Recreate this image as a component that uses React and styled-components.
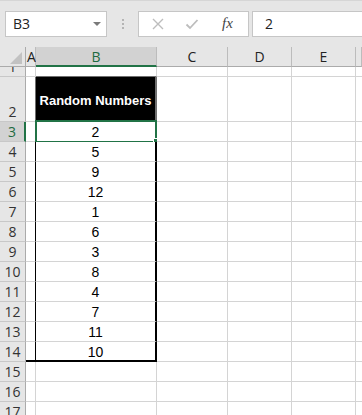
import React from 'react'
import styled, { createGlobalStyle } from 'styled-components'

const GlobalStyle = createGlobalStyle`
  html, body {
    margin: 0;
    padding: 0;
    background: #ffffff;
    overflow: hidden;
  }
  * {
    box-sizing: border-box;
  }
`

const Page = styled.div`
  width: 362px;
  height: 415px;
  overflow: hidden;
  font-family: "Open Sans", "Liberation Sans", sans-serif;
`

const FormulaBar = styled.div`
  height: 47px;
  background: #e6e6e6;
  border-top: 1px solid #d6d6d6;
  display: flex;
  align-items: center;
  padding: 0 0 1px 5px;
`

const NameBox = styled.div`
  width: 102px;
  height: 26px;
  background: #fff;
  border: 1px solid #c6c6c6;
  display: flex;
  align-items: center;
  justify-content: space-between;
  padding: 0 5px 0 7px;
  font-size: 14px;
  color: #222;
`

const Caret = styled.span`
  width: 0;
  height: 0;
  border-left: 4px solid transparent;
  border-right: 4px solid transparent;
  border-top: 4px solid #7a7a7a;
  margin-top: 1px;
`

const Grip = styled.div`
  width: 31px;
  display: flex;
  flex-direction: column;
  align-items: center;
  gap: 2px;

  span {
    width: 2px;
    height: 2px;
    background: #b4b4b4;
  }
`

const FxBox = styled.div`
  width: 111px;
  height: 26px;
  background: #fff;
  border: 1px solid #c6c6c6;
  display: flex;
  align-items: center;
  padding: 0 0 0 12px;
  gap: 20px;
`

const Fx = styled.span`
  font-family: "Liberation Serif", "DejaVu Serif", serif;
  font-style: italic;
  font-size: 15px;
  color: #444;
  margin-left: 3px;
`

const ValueBox = styled.div`
  flex: 1;
  height: 26px;
  margin-left: 3px;
  background: #fff;
  border: 1px solid #c6c6c6;
  border-right: none;
  display: flex;
  align-items: center;
  padding-left: 12px;
  font-size: 14px;
  color: #222;
`

const Sheet = styled.div`
  display: grid;
  grid-template-columns: 26px 10px 121px 71px 64px 64px 1fr;
  grid-template-rows: 20px 10px 45px;
  grid-auto-rows: 20px;
`

const Corner = styled.div`
  background: #e6e6e6;
  border-right: 1px solid #ababab;
  border-bottom: 1px solid #ababab;
  display: flex;
  align-items: flex-end;
  justify-content: flex-end;
  padding: 0 3px 2px 0;
`

const ColHead = styled.div`
  background: ${p => (p.$active ? '#d2d2d2' : '#e6e6e6')};
  border-right: 1px solid #bcbcbc;
  border-bottom: ${p => (p.$active ? '2px solid #217346' : '1px solid #ababab')};
  color: ${p => (p.$active ? '#1e6b41' : '#222')};
  font-size: 14px;
  display: flex;
  align-items: center;
  justify-content: ${p => (p.$narrow ? 'flex-start' : 'center')};
  padding-left: ${p => (p.$narrow ? '1px' : '0')};
  overflow: visible;
  white-space: nowrap;
`

const RowHead = styled.div`
  background: ${p => (p.$active ? '#d2d2d2' : '#e6e6e6')};
  border-right: ${p => (p.$active ? '2px solid #217346' : '1px solid #ababab')};
  border-bottom: 1px solid #c8c8c8;
  color: ${p => (p.$active ? '#1e6b41' : '#333')};
  font-size: 14px;
  line-height: 18px;
  display: flex;
  align-items: flex-end;
  justify-content: center;
  overflow: hidden;
`

const Cell = styled.div`
  position: relative;
  background: ${p => p.$bg || '#fff'};
  border-right: ${p => p.$right || '1px solid #d4d4d4'};
  border-bottom: ${p => p.$bottom || '1px solid #d4d4d4'};
  color: ${p => p.$color || '#000'};
  font-family: "Liberation Sans", Arial, sans-serif;
  font-size: ${p => (p.$bold ? '13px' : '14px')};
  font-weight: ${p => (p.$bold ? 700 : 400)};
  display: flex;
  align-items: center;
  justify-content: center;
  padding-top: ${p => (p.$bold ? '3px' : '1px')};
  white-space: nowrap;
`

const Selection = styled.div`
  position: absolute;
  left: -1px;
  top: -2px;
  width: 122px;
  height: 23px;
  border: 2px solid #217346;
  pointer-events: none;
`

const Handle = styled.div`
  position: absolute;
  left: 116px;
  top: 16px;
  width: 7px;
  height: 7px;
  background: #217346;
  border: 1px solid #fff;
`

const numbers = [2, 5, 9, 12, 1, 6, 3, 8, 4, 7, 11, 10]
const GRAY_EDGE = '1px solid #6f6f6f'

const Icon = ({ children }) => (
  <svg width="14" height="14" viewBox="0 0 14 14" fill="none">
    {children}
  </svg>
)

const App = () => {
  const rows = []
  for (let r = 1; r <= 17; r++) {
    const isData = r >= 3 && r <= 14
    const isLast = r === 14
    let aRight
    let bProps = {}
    if (r === 2) {
      aRight = GRAY_EDGE
      bProps = { $bg: '#000', $color: '#fff', $bold: true, $right: '2px solid #6f6f6f' }
    } else if (isData) {
      aRight = '1px solid #000'
      bProps = { $right: '2px solid #000', $bottom: isLast ? '2px solid #000' : undefined }
    } else if (r === 1) {
      bProps = { $bottom: GRAY_EDGE }
    }
    rows.push(
      <React.Fragment key={r}>
        <RowHead $active={r === 3}>{r}</RowHead>
        <Cell $right={aRight} $bottom={isLast ? '2px solid #000' : undefined} />
        <Cell {...bProps}>
          {r === 2 && 'Random Numbers'}
          {isData && numbers[r - 3]}
          {r === 3 && (
            <Selection>
              <Handle />
            </Selection>
          )}
        </Cell>
        <Cell />
        <Cell />
        <Cell />
        <Cell $right="none" />
      </React.Fragment>
    )
  }

  return (
    <Page>
      <GlobalStyle />
      <FormulaBar>
        <NameBox>
          B3
          <Caret />
        </NameBox>
        <Grip>
          <span />
          <span />
          <span />
        </Grip>
        <FxBox>
          <Icon>
            <path d="M2 2 L12 12 M12 2 L2 12" stroke="#bdbdbd" strokeWidth="1.4" />
          </Icon>
          <Icon>
            <path d="M1.5 7.5 L5 11 L12.5 3" stroke="#bdbdbd" strokeWidth="1.8" />
          </Icon>
          <Fx>fx</Fx>
        </FxBox>
        <ValueBox>2</ValueBox>
      </FormulaBar>
      <Sheet>
        <Corner>
          <svg width="12" height="12" viewBox="0 0 12 12">
            <polygon points="12,0 12,12 0,12" fill="#c2c2c2" />
          </svg>
        </Corner>
        <ColHead $narrow>A</ColHead>
        <ColHead $active>B</ColHead>
        <ColHead>C</ColHead>
        <ColHead>D</ColHead>
        <ColHead>E</ColHead>
        <ColHead />
        {rows}
      </Sheet>
    </Page>
  )
}

export default App
